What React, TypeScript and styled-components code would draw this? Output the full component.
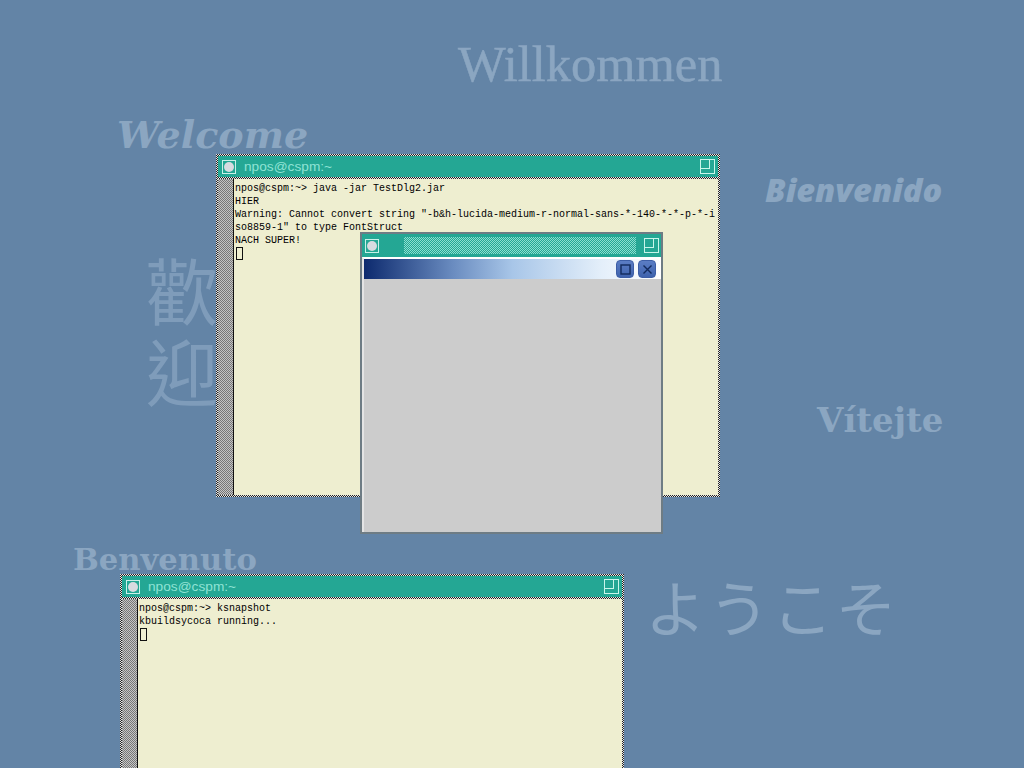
import React from "react";
import styled, { createGlobalStyle } from "styled-components";

const Global = createGlobalStyle`
  html, body { margin: 0; padding: 0; background: #6384a6; }
  #root { width: 1024px; height: 768px; overflow: hidden; position: relative; }
`;

const Desktop = styled.div`
  position: relative;
  width: 1024px;
  height: 768px;
  overflow: hidden;
  background: #6384a6;
`;

const Greeting = styled.div<{ $x: number; $y: number; $size: number; $font: string; $weight?: number; $italic?: boolean; $spacing?: number; $stroke?: number }>`
  position: absolute;
  left: ${(p) => p.$x}px;
  top: ${(p) => p.$y}px;
  font-family: ${(p) => p.$font};
  font-size: ${(p) => p.$size}px;
  font-weight: ${(p) => p.$weight ?? 400};
  font-style: ${(p) => (p.$italic ? "italic" : "normal")};
  letter-spacing: ${(p) => p.$spacing ?? 0}px;
  -webkit-text-stroke: ${(p) => p.$stroke ?? 0}px currentColor;
  line-height: 1;
  white-space: nowrap;
  color: #8ba6c1;
`;

const VerticalGreeting = styled(Greeting)`
  white-space: normal;
  width: 80px;
  line-height: 81px;
  color: #7f9cba;
`;

const Win = styled.div<{ $x: number; $y: number; $w: number; $h: number }>`
  position: absolute;
  left: ${(p) => p.$x}px;
  top: ${(p) => p.$y}px;
  width: ${(p) => p.$w}px;
  height: ${(p) => p.$h}px;
  box-sizing: border-box;
  padding: 2px;
  display: flex;
  flex-direction: column;
  background: repeating-conic-gradient(#222 0 25%, #e6e6e6 0 50%) 0 0 / 2px 2px;
`;

const TitleBar = styled.div`
  height: 21px;
  flex: none;
  box-sizing: border-box;
  display: flex;
  align-items: center;
  padding: 0 3px 0 4px;
  background: #24a794;
`;

const CloseBox = styled.div`
  width: 14px;
  height: 14px;
  box-sizing: border-box;
  border: 1px solid #c8f0e8;
  display: flex;
  align-items: center;
  justify-content: center;
  flex: none;
  &::after {
    content: "";
    width: 10px;
    height: 10px;
    border-radius: 50%;
    background: #d8dbe0;
  }
`;

const TitleText = styled.div`
  margin-left: 8px;
  flex: 1;
  font-family: "Liberation Sans", sans-serif;
  font-size: 13.7px;
  color: #8fe3d4;
  white-space: nowrap;
`;

const Stipple = styled.div`
  flex: 1;
  height: 17px;
  margin: 0 8px 0 25px;
  background: repeating-conic-gradient(#8be0d0 0 25%, #24a794 0 50%) 0 0 / 2px 2px;
`;

const ResizeIcon = styled.svg`
  width: 15px;
  height: 15px;
  flex: none;
  display: block;
`;

const TermBody = styled.div`
  flex: 1;
  display: flex;
  min-height: 0;
  margin-top: 2px;
  background: #eeeed0;
`;

const ScrollTrack = styled.div`
  width: 15px;
  flex: none;
  background: repeating-conic-gradient(#777 0 25%, #c4c4c4 0 50%) 0 0 / 2px 2px;
  border-right: 1px solid #111;
`;

const TermText = styled.pre`
  margin: 0;
  padding: 3px 0 0 1px;
  font-family: "Liberation Mono", monospace;
  font-size: 10px;
  line-height: 13px;
  color: #000;
  overflow: hidden;
`;

const Cursor = styled.span`
  display: inline-block;
  width: 7px;
  height: 13px;
  margin-left: 1px;
  box-sizing: border-box;
  border: 1px solid #111;
  vertical-align: top;
`;

const Dialog = styled.div`
  position: absolute;
  left: 360px;
  top: 232px;
  width: 303px;
  height: 302px;
  box-sizing: border-box;
  border: 2px solid #6e7c84;
  display: flex;
  flex-direction: column;
  background: #cccccc;
`;

const DialogContent = styled.div`
  flex: 1;
  box-sizing: border-box;
  border-top: 2px solid #fff;
  border-left: 2px solid #e4e4e4;
  display: flex;
  flex-direction: column;
`;

const DialogTitleBar = styled(TitleBar)`
  height: 23px;
  padding: 0 2px 0 3px;
`;

const Caption = styled.div`
  height: 20px;
  flex: none;
  box-sizing: border-box;
  display: flex;
  align-items: center;
  justify-content: flex-end;
  gap: 4px;
  padding-right: 5px;
  background: linear-gradient(to right, #0d2a6e 0%, #6a8cc0 30%, #a8c6e8 50%, #e4effa 80%, #ffffff 100%);
`;

const CapButton = styled.div`
  width: 18px;
  height: 18px;
  box-sizing: border-box;
  border-radius: 4px;
  border: 1px solid #3d5ea6;
  background: linear-gradient(#5b7dc4, #3f63ad);
  display: flex;
  align-items: center;
  justify-content: center;
`;

const Resize = () => (
  <ResizeIcon viewBox="0 0 15 15" fill="none" stroke="#c8f5ea" strokeWidth="1" shapeRendering="crispEdges">
    <rect x="0.5" y="0.5" width="14" height="14" />
    <path d="M0.5 9.5H9.5V0.5" />
  </ResizeIcon>
);

const Terminal: React.FC<{ x: number; y: number; w: number; h: number; lines: string[] }> = ({ x, y, w, h, lines }) => (
  <Win $x={x} $y={y} $w={w} $h={h}>
    <TitleBar>
      <CloseBox />
      <TitleText>npos@cspm:~</TitleText>
      <Resize />
    </TitleBar>
    <TermBody>
      <ScrollTrack />
      <TermText>
        {lines.join("\n")}
        {"\n"}
        <Cursor />
      </TermText>
    </TermBody>
  </Win>
);

export default function App() {
  return (
    <Desktop>
      <Global />
      <Greeting $x={458} $y={39} $size={50.5} $font={'"Liberation Serif", serif'} $stroke={0.5}>Willkommen</Greeting>
      <Greeting $x={117} $y={116} $size={38} $font={'"DejaVu Serif", serif'} $weight={700} $italic>Welcome</Greeting>
      <Greeting $x={765} $y={174} $size={32.6} $font={'"Open Sans", sans-serif'} $weight={800} $italic>Bienvenido</Greeting>
      <Greeting $x={817} $y={403} $size={34} $font={'"DejaVu Serif", serif'} $weight={700}>Vítejte</Greeting>
      <Greeting $x={73} $y={544} $size={30.6} $font={'"DejaVu Serif", serif'} $weight={700}>Benvenuto</Greeting>
      <Greeting $x={645} $y={575} $size={61} $spacing={2.5} $font={'"Noto Sans CJK JP", sans-serif'}>ようこそ</Greeting>
      <VerticalGreeting $x={146} $y={247} $size={72} $font={'"Noto Sans CJK TC", serif'}>歡迎</VerticalGreeting>

      <Terminal
        x={216}
        y={154}
        w={504}
        h={343}
        lines={[
          'npos@cspm:~> java -jar TestDlg2.jar',
          'HIER',
          'Warning: Cannot convert string "-b&h-lucida-medium-r-normal-sans-*-140-*-*-p-*-i',
          'so8859-1" to type FontStruct',
          'NACH SUPER!',
        ]}
      />

      <Terminal
        x={120}
        y={574}
        w={504}
        h={343}
        lines={['npos@cspm:~> ksnapshot', 'kbuildsycoca running...']}
      />

      <Dialog>
        <DialogTitleBar>
          <CloseBox />
          <Stipple />
          <Resize />
        </DialogTitleBar>
        <DialogContent>
          <Caption>
            <CapButton>
              <svg width="11" height="11" viewBox="0 0 11 11" fill="none" stroke="#122a5c" strokeWidth="1.4">
                <rect x="1" y="1" width="9" height="9" />
              </svg>
            </CapButton>
            <CapButton>
              <svg width="11" height="11" viewBox="0 0 11 11" fill="none" stroke="#122a5c" strokeWidth="1.4">
                <path d="M1.5 1.5L9.5 9.5M9.5 1.5L1.5 9.5" />
              </svg>
            </CapButton>
          </Caption>
        </DialogContent>
      </Dialog>
    </Desktop>
  );
}
